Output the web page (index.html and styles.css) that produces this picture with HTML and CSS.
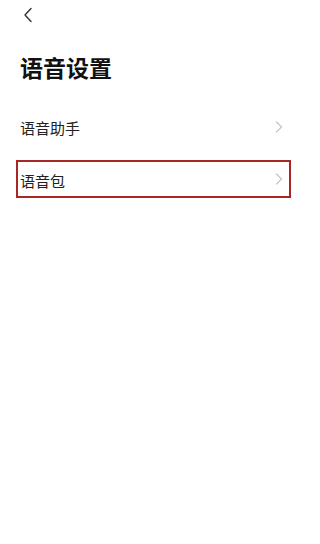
FILE: index.html
```html
<!DOCTYPE html>
<html lang="zh">
<head>
<meta charset="utf-8">
<link rel="stylesheet" href="styles.css">
</head>
<body>
<div class="topbar">
  <svg class="back" width="10" height="16" viewBox="0 0 10 16"><path d="M8 1.5 L2 8 L8 14.5" fill="none" stroke="#333" stroke-width="1.4" stroke-linecap="round" stroke-linejoin="round"/></svg>
</div>
<h1 class="title">语音设置</h1>
<div class="list">
  <div class="row"><span class="label">语音助手</span><svg class="chev" width="8" height="12" viewBox="0 0 8 12"><path d="M1.5 1 L6.5 6 L1.5 11" fill="none" stroke="#c4c4c4" stroke-width="1.2" stroke-linecap="round" stroke-linejoin="round"/></svg></div>
  <div class="row highlight"><span class="label">语音包</span><svg class="chev" width="8" height="12" viewBox="0 0 8 12"><path d="M1.5 1 L6.5 6 L1.5 11" fill="none" stroke="#c4c4c4" stroke-width="1.2" stroke-linecap="round" stroke-linejoin="round"/></svg></div>
</div>
</body>
</html>
```
FILE: styles.css
```css
html, body {
  margin: 0;
  padding: 0;
  background: #ffffff;
}
body {
  font-family: "Noto Sans CJK SC", "Noto Sans", sans-serif;
  color: #1a1a1a;
  width: 298px;
  height: 544px;
}
.topbar {
  height: 30px;
  display: flex;
  align-items: center;
  padding-left: 23px;
}
.back {
  display: block;
}
.title {
  margin: 22px 0 0 20px;
  font-size: 23px;
  line-height: 30px;
  font-weight: 700;
  color: #111;
}
.list {
  margin-top: 26px;
  display: flex;
  flex-direction: column;
  gap: 14px;
}
.row {
  margin: 0 7px 0 16px;
  height: 34px;
  border: 2px solid transparent;
  padding: 0 6px 0 2px;
  display: flex;
  align-items: center;
  justify-content: space-between;
}
.label {
  font-size: 15px;
  color: #222;
}
.highlight {
  border-color: #a82624;
}
.highlight .label {
  padding-top: 3px;
}
.chev {
  display: block;
}
```
